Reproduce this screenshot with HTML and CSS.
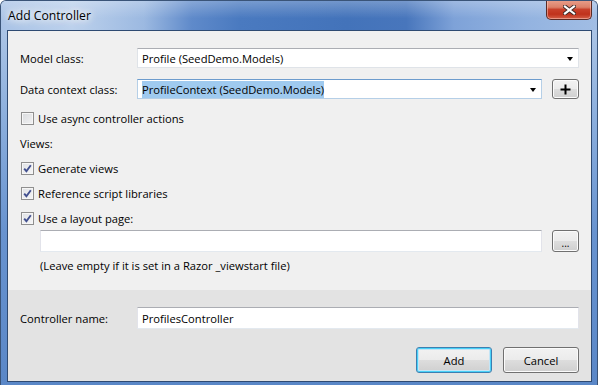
FILE: index.html
```html
<!DOCTYPE html>
<html lang="en">
<head>
    <meta charset="UTF-8">
    <title>Add Controller</title>
    <link rel="stylesheet" href="styles.css">
</head>
<body>
    <div class="window">
        <div class="titlebar">
            <span class="title">Add Controller</span>
            <button class="close-btn" aria-label="Close">
                <svg width="13" height="10" viewBox="0 0 13 10">
                    <path d="M2 1.5 L11 8.5 M11 1.5 L2 8.5" stroke="#3b2a28" stroke-width="4" stroke-linecap="square"/>
                    <path d="M2 1.5 L11 8.5 M11 1.5 L2 8.5" stroke="#ffffff" stroke-width="2.2" stroke-linecap="square"/>
                </svg>
            </button>
        </div>

        <div class="client">
            <div class="main">
                <div class="field-row">
                    <label class="field-label">Model class:</label>
                    <div class="combo">
                        <span class="combo-text">Profile (SeedDemo.Models)</span>
                        <span class="arrow"></span>
                    </div>
                </div>

                <div class="field-row second">
                    <label class="field-label">Data context class:</label>
                    <div class="combo focused">
                        <span class="combo-text"><span class="selected">ProfileContext (SeedDemo.Models)</span></span>
                        <span class="arrow"></span>
                    </div>
                    <button class="btn small-btn">
                        <svg width="11" height="11" viewBox="0 0 11 11">
                            <rect x="4.5" y="0.5" width="2" height="10" fill="#000"/>
                            <rect x="0.5" y="4.5" width="10" height="2" fill="#000"/>
                        </svg>
                    </button>
                </div>

                <div class="check-row first-check">
                    <span class="checkbox"></span>
                    <span>Use async controller actions</span>
                </div>

                <div class="check-row">
                    <span class="group-label">Views:</span>
                </div>

                <div class="check-row">
                    <span class="checkbox checked">
                        <svg width="9" height="9" viewBox="0 0 9 9"><path d="M1.2 4.6 L3.4 7.2 L7.8 1.2" stroke="#42508f" stroke-width="1.9" fill="none"/></svg>
                    </span>
                    <span>Generate views</span>
                </div>

                <div class="check-row">
                    <span class="checkbox checked">
                        <svg width="9" height="9" viewBox="0 0 9 9"><path d="M1.2 4.6 L3.4 7.2 L7.8 1.2" stroke="#42508f" stroke-width="1.9" fill="none"/></svg>
                    </span>
                    <span>Reference script libraries</span>
                </div>

                <div class="check-row last-check">
                    <span class="checkbox checked">
                        <svg width="9" height="9" viewBox="0 0 9 9"><path d="M1.2 4.6 L3.4 7.2 L7.8 1.2" stroke="#42508f" stroke-width="1.9" fill="none"/></svg>
                    </span>
                    <span>Use a layout page:</span>
                </div>

                <div class="layout-row">
                    <input type="text" class="textbox layout-input">
                    <button class="btn small-btn dots">...</button>
                </div>

                <div class="hint">(Leave empty if it is set in a Razor _viewstart file)</div>
            </div>

            <div class="footer">
                <div class="field-row">
                    <label class="field-label">Controller name:</label>
                    <input type="text" class="textbox name-input" value="ProfilesController">
                </div>
                <div class="actions">
                    <button class="btn action-btn default">Add</button>
                    <button class="btn action-btn">Cancel</button>
                </div>
            </div>
        </div>
    </div>
</body>
</html>
```

FILE: styles.css
```css
body {
    margin: 0;
    background-color: #ffffff;
    font-family: "Open Sans", "Noto Sans", sans-serif;
    font-size: 11.2px;
    color: #000000;
}

.window {
    width: 598px;
    height: 385px;
    box-sizing: border-box;
    border-radius: 6px 6px 0 0;
    border: 1px solid #3a5478;
    border-bottom: none;
    background: linear-gradient(to bottom, #b5cbe8 0%, #8cafdd 30%, #6893cf 60%, #5a87c7 100%);
    display: flex;
    flex-direction: column;
    overflow: hidden;
}

.titlebar {
    height: 29px;
    display: flex;
    align-items: flex-start;
    padding: 0 5px 0 7px;
    background:
        linear-gradient(to bottom, rgba(255, 255, 255, 0.25), rgba(255, 255, 255, 0) 60%),
        linear-gradient(to right, #a9c3e6 0%, #bcd1ec 12%, #9cb9e1 24%, #5f8aca 32%, #4a7ac0 40%, #4373ba 58%, #4876bc 68%, #7ea2d8 76%, #93b3e0 88%, #a1bde4 100%);
}

.title {
    line-height: 29px;
    font-size: 12.2px;
    color: #000000;
    text-shadow: 0 0 6px #ffffff, 0 0 10px #ffffff, 0 0 14px rgba(255, 255, 255, 0.9);
}

.close-btn {
    margin-left: auto;
    width: 46px;
    height: 20px;
    margin-top: -1px;
    padding: 0;
    border: 1px solid #5a2a24;
    border-top: none;
    border-radius: 0 0 5px 5px;
    background: linear-gradient(to bottom, #e9a08c 0%, #dc8069 38%, #c8402a 50%, #c0321c 75%, #d46048 100%);
    box-shadow: inset 0 0 0 1px rgba(255, 210, 200, 0.5);
    display: flex;
    align-items: center;
    justify-content: center;
}

.client {
    margin: 0 5px 3px 6px;
    flex: 1;
    border: 1px solid #2e4a72;
    background-color: #f0f0f0;
    display: flex;
    flex-direction: column;
}

.main {
    height: 259px;
    box-sizing: border-box;
    padding: 17px 12px 0 12px;
}

.field-row {
    display: flex;
    align-items: center;
}

.field-row.second {
    margin-top: 11px;
}

.field-label {
    width: 117px;
    flex-shrink: 0;
}

.combo {
    flex: 1;
    height: 20px;
    box-sizing: border-box;
    background-color: #ffffff;
    border: 1px solid #dfe3e8;
    border-top-color: #abadb3;
    display: flex;
    align-items: center;
    padding: 0 5px 0 4px;
}

.combo.focused {
    border-color: #b5cfe7;
    border-top-color: #6d9ccd;
}

.combo-text {
    flex: 1;
    white-space: nowrap;
}

.selected {
    background-color: #9fcaef;
    padding: 1px 0;
}

.arrow {
    width: 0;
    height: 0;
    border-left: 3.5px solid transparent;
    border-right: 3.5px solid transparent;
    border-top: 4px solid #000000;
    margin-top: 1px;
}

.btn {
    font-family: inherit;
    font-size: inherit;
    color: #000000;
    border: 1px solid #707070;
    border-radius: 3px;
    background: linear-gradient(to bottom, #f2f2f2 0%, #ebebeb 50%, #dddddd 51%, #cfcfcf 100%);
    box-shadow: inset 0 0 0 1px #fbfbfb;
    padding: 0;
    cursor: pointer;
}

.small-btn {
    width: 27px;
    height: 20px;
    margin-left: 10px;
    display: flex;
    align-items: center;
    justify-content: center;
    flex-shrink: 0;
}

.check-row {
    height: 25px;
    display: flex;
    align-items: center;
}

.check-row.first-check {
    margin-top: 7px;
}

.check-row.last-check {
    height: 24px;
}

.checkbox {
    width: 13px;
    height: 13px;
    box-sizing: border-box;
    margin: 0 4px 0 1px;
    border: 1px solid #8f8f8f;
    background: linear-gradient(135deg, #d9dbde 0%, #f2f2f3 100%);
    box-shadow: inset 0 0 0 1px #f6f6f6;
    display: flex;
    align-items: center;
    justify-content: center;
}

.checkbox.checked {
    background: linear-gradient(135deg, #dfe1e5 0%, #f6f6f7 100%);
}

.layout-row {
    display: flex;
    align-items: center;
    padding-left: 20px;
}

.textbox {
    font-family: inherit;
    font-size: inherit;
    height: 22px;
    box-sizing: border-box;
    border: 1px solid #e2e3ea;
    border-top-color: #abadb3;
    border-bottom-color: #e3e9ef;
    background-color: #ffffff;
    padding: 0 4px;
    outline: none;
}

.layout-input {
    flex: 1;
}

.dots {
    height: 22px;
    font-size: 10px;
    line-height: 10px;
    padding-top: 3px;
    box-sizing: border-box;
}

.hint {
    margin-top: 6px;
    padding-left: 20px;
    line-height: 16px;
}

.footer {
    flex: 1;
    background-color: #e3e3e3;
    padding: 17px 12px 0 12px;
}

.name-input {
    flex: 1;
}

.actions {
    margin-top: 18px;
    display: flex;
    justify-content: flex-end;
    gap: 11px;
}

.action-btn {
    width: 76px;
    height: 26px;
}

.action-btn.default {
    border-color: #3c7fb1;
    box-shadow: inset 0 0 0 1px #48d1f8, inset 0 0 0 2px #c4e5f6;
}
```
